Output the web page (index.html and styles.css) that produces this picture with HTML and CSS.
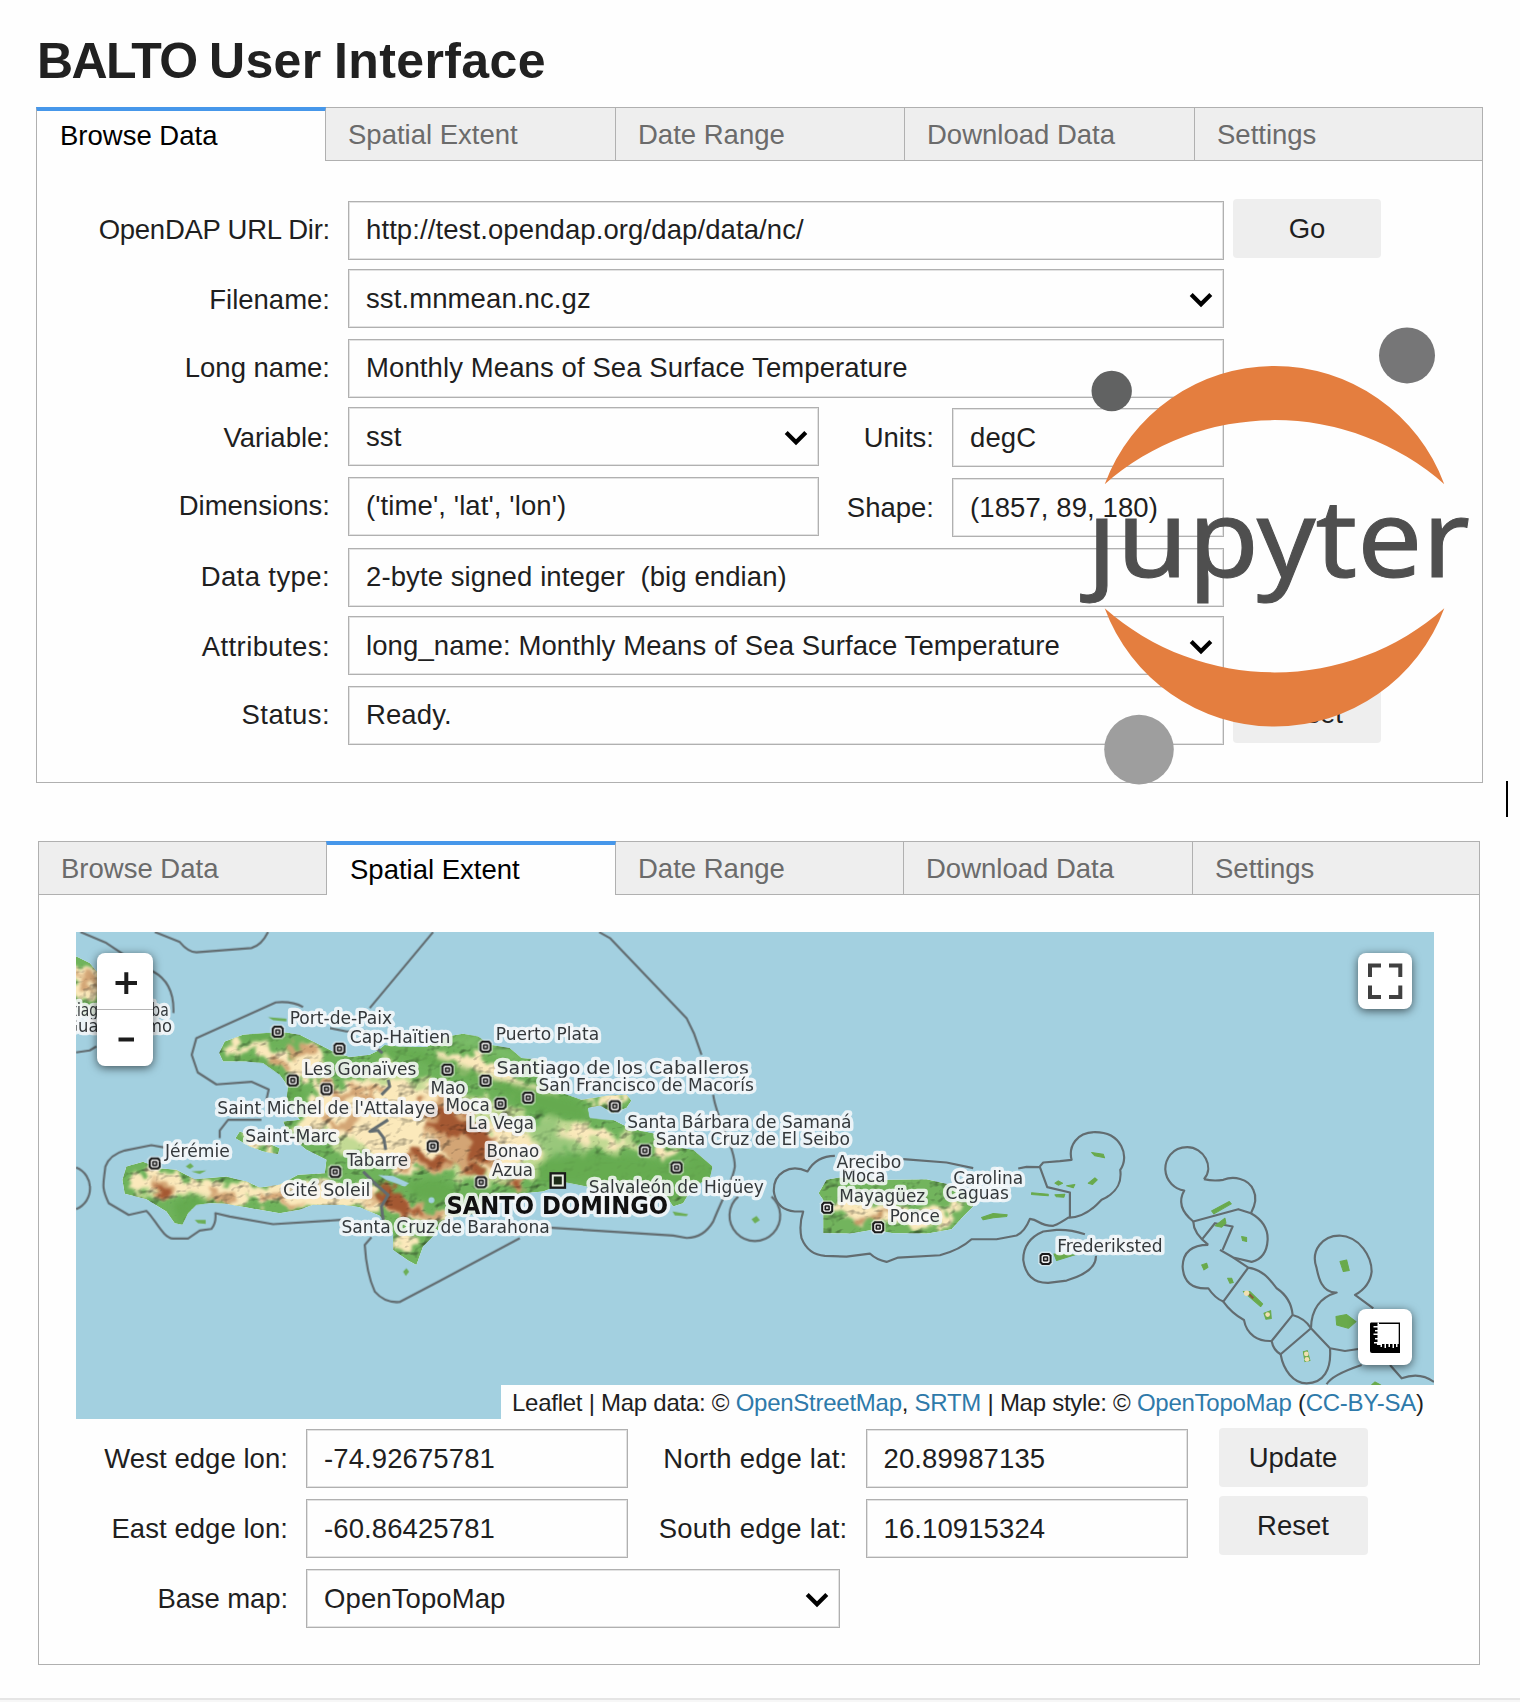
FILE: index.html
```html
<!DOCTYPE html>
<html lang="en">
<head>
<meta charset="utf-8">
<title>BALTO User Interface</title>
<link rel="stylesheet" href="styles.css">
</head>
<body>
<svg class="defs" width="0" height="0" aria-hidden="true">
  <symbol id="chevron" viewBox="0 0 24 16"><path d="M2.2 2.4 12 12.2 21.8 2.4" fill="none" stroke="#000" stroke-width="4.2"/></symbol>
</svg>
<main class="page">
  <h1 class="title"><span class="tight">BALTO</span> User Interface</h1>

  <section class="widget widget-browse">
    <nav class="tabs">
      <div class="tab active">Browse Data</div>
      <div class="tab">Spatial Extent</div>
      <div class="tab">Date Range</div>
      <div class="tab">Download Data</div>
      <div class="tab">Settings</div>
    </nav>
    <div class="body form-browse">
      <div class="row"><label class="label narrow">OpenDAP URL Dir:</label><div class="field wide">http://test.opendap.org/dap/data/nc/</div><div class="button">Go</div></div>
      <div class="row"><label class="label low">Filename:</label><div class="field wide select">sst.mnmean.nc.gz<svg class="chev"><use href="#chevron"/></svg></div></div>
      <div class="row"><label class="label">Long name:</label><div class="field wide">Monthly Means of Sea Surface Temperature</div></div>
      <div class="row"><label class="label low">Variable:</label><div class="field half select">sst<svg class="chev"><use href="#chevron"/></svg></div><label class="label second">Units:</label><div class="field small">degC</div></div>
      <div class="row"><label class="label">Dimensions:</label><div class="field half">('time', 'lat', 'lon')</div><label class="label second">Shape:</label><div class="field small">(1857, 89, 180)</div></div>
      <div class="row"><label class="label loose">Data type:</label><div class="field wide">2-byte signed integer&nbsp; (big endian)</div></div>
      <div class="row"><label class="label low loose">Attributes:</label><div class="field wide select">long_name: Monthly Means of Sea Surface Temperature<svg class="chev"><use href="#chevron"/></svg></div></div>
      <div class="row"><label class="label loose">Status:</label><div class="field wide">Ready.</div><div class="button">Reset</div></div>
    </div>
    <svg class="logo" viewBox="1070 320 410 470">
      <g fill="#e47e3f">
        <path d="M1104.7 484.2A181 181 0 0 1 1444.3 484.2A257 257 0 0 0 1104.7 484.2Z"/>
        <path d="M1104.7 608.3A181 181 0 0 0 1444.3 608.3A257 257 0 0 1 1104.7 608.3Z"/>
      </g>
      <circle cx="1111.7" cy="391" r="20.2" fill="#616262"/>
      <circle cx="1407" cy="355.4" r="28" fill="#767677"/>
      <circle cx="1139" cy="749.6" r="34.8" fill="#9e9e9e"/>
      <text class="logo-text" x="1087" y="576.5" textLength="383" lengthAdjust="spacingAndGlyphs">ȷupyter</text>
    </svg>
    <span class="caret"></span>
  </section>

  <section class="widget widget-spatial">
    <nav class="tabs">
      <div class="tab">Browse Data</div>
      <div class="tab active">Spatial Extent</div>
      <div class="tab">Date Range</div>
      <div class="tab">Download Data</div>
      <div class="tab">Settings</div>
    </nav>
    <div class="body form-spatial">
      <div class="map">
        <svg class="map-art" viewBox="49 37 4073 1460" preserveAspectRatio="none">
          <defs>
            <filter id="rough" x="-20%" y="-20%" width="140%" height="140%">
              <feTurbulence type="fractalNoise" baseFrequency="0.022" numOctaves="4" seed="7" result="n"/>
              <feDisplacementMap in="SourceGraphic" in2="n" scale="85" xChannelSelector="R" yChannelSelector="G"/>
              <feGaussianBlur stdDeviation="5"/>
            </filter>
            <filter id="soft" x="-10%" y="-10%" width="120%" height="120%"><feGaussianBlur stdDeviation="9"/></filter>
            <filter id="relief" x="0" y="0" width="100%" height="100%" color-interpolation-filters="sRGB">
              <feTurbulence type="fractalNoise" baseFrequency="0.018 0.024" numOctaves="3" seed="12" result="n"/>
              <feColorMatrix in="n" type="matrix" values="0 0 0 0 0  0 0 0 0 0  0 0 0 0 0  1 0 0 0 0" result="h"/>
              <feDiffuseLighting in="h" surfaceScale="8" diffuseConstant="1.38" lighting-color="#fff" result="l"><feDistantLight azimuth="225" elevation="50"/></feDiffuseLighting>
              <feBlend in="SourceGraphic" in2="l" mode="multiply" result="b"/>
              <feComposite in="b" in2="SourceGraphic" operator="in"/>
            </filter>
            <clipPath id="land">
              <path d="M478 400L495 365 550 345 620 340 680 338 720 345 770 370 820 395 870 412 930 405 950 395 975 376 1020 380 1100 382 1160 350 1210 342 1255 350 1290 375 1350 385 1385 415 1460 420 1450 500 1565 540 1640 528 1700 525 1715 542 1700 565 1660 580 1620 558 1585 565 1590 592 1660 600 1710 625 1780 640 1840 680 1900 690 1958 740 1950 775 1900 800 1870 850 1840 860 1820 830 1720 830 1580 800 1520 788 1450 815 1290 830 1260 880 1160 895 1120 950 1090 980 1070 1035 1045 1022 1000 990 1000 940 960 888 900 862 850 855 760 855 720 870 660 880 600 870 500 852 450 850 410 855 385 880 368 915 345 910 320 875 260 838 195 822 188 780 200 740 250 726 300 745 350 750 405 778 500 770 560 785 600 803 660 795 715 765 795 760 800 720 740 690 690 650 670 605 720 600 690 560 680 540 685 500 660 465 610 430 560 425 490 425Z"/>
              <path d="M527 655L540 635 580 650 660 685 655 703 610 695 570 680Z"/>
              <path d="M49 110L90 130 115 160 115 290 49 290Z"/>
            </clipPath>
            <clipPath id="rico"><path d="M190 400L190 300 176 280 200 240 240 232 380 240 500 238 560 252 640 290 640 320 610 350 575 388 500 402 400 400 340 390 270 402Z"/></clipPath>
            <g id="town"><path d="M-14-22H14L22-14V14L14 22H-14L-22 14V-14Z" fill="#f5f5f5" opacity=".55"/><path d="M-11-18H11L18-11V11L11 18H-11L-18 11V-11Z" fill="#1a1a1a"/><path d="M-8-12H8L12-8V8L8 12H-8L-12 8V-8Z" fill="#f2f2f2"/><rect x="-8" y="-8" width="16" height="16" rx="4" fill="#1c1c1c"/><rect x="-3.500" y="-3.500" width="7" height="7" fill="#c5c5c5"/></g>
          </defs>
          <rect x="0" y="0" width="4200" height="1560" fill="#a3d0e0"/>

          <g filter="url(#relief)"><g clip-path="url(#land)">
            <rect x="40" y="90" width="1950" height="980" fill="#6fb35b"/>
            <g filter="url(#rough)" fill="#c3da94">
              <path d="M980 420L1120 480 1300 540 1380 600 1480 590 1700 640 1780 700 1500 700 1440 780 1300 800 1000 720 850 700 700 620Z"/>
              <path d="M220 750L420 790 700 800 880 800 900 850 500 840 240 830Z"/>
            </g>
            <g filter="url(#rough)" fill="#fbe9bb">
              <path d="M490 380L600 360 680 400 740 370 800 430 780 500 1000 470 1140 520 1220 600 1400 640 1440 700 1300 770 1200 700 1030 760 900 660 700 630 760 570 760 500 660 440 560 390 500 410Z"/>
              <path d="M210 750L300 760 420 785 560 800 700 790 900 800 1080 870 1200 880 1080 900 920 860 700 855 560 845 380 820 220 815Z"/>
              <path d="M1120 395L1200 400 1300 430 1400 490 1500 530 1470 550 1300 480 1130 420Z"/>
              <path d="M1500 625L1600 610 1680 650 1700 680 1600 670 1500 655Z"/>
              <path d="M1560 540L1650 530 1710 545 1650 555Z"/><path d="M1780 690L1870 690 1850 720 1790 720Z"/>
              <path d="M530 640L660 690 650 710 570 680Z"/><path d="M1010 940L1080 950 1060 1000 1010 980Z"/>
              <path d="M49 130L115 160 115 250 49 260Z"/>
            </g>
            <g filter="url(#rough)" fill="#d3a575">
              <path d="M700 370L770 390 760 420 690 390Z"/><path d="M640 400L700 440 680 460 630 430Z"/>
              <path d="M790 490L900 510 980 490 940 530 820 530Z"/><path d="M800 600L900 600 860 640 800 620Z"/>
              <path d="M280 780L350 800 330 840 280 825Z"/><path d="M430 820L520 815 500 850 440 840Z"/>
              <path d="M600 820L730 840 700 860 620 845Z"/><path d="M60 150L90 160 100 220 60 200Z"/>
              <path d="M1100 540L1160 530 1300 640 1310 730 1220 760 1140 690 1080 620Z"/>
              <path d="M1010 690L1180 720 1160 760 1020 740Z"/><path d="M900 820L1120 870 1150 890 1020 890Z"/>
              <path d="M1330 780L1410 790 1380 810 1320 810Z"/>
            </g>
            <g filter="url(#rough)" fill="#a45830">
              <path d="M1130 560L1180 580 1260 620 1320 640 1290 670 1270 740 1220 720 1230 660 1180 640 1090 630 1080 610 1150 600Z"/>
              <path d="M950 800L1010 820 1080 880 1020 885 960 850Z"/><path d="M1040 690L1120 700 1200 740 1120 735 1040 715Z"/>
              <path d="M1100 550L1130 545 1140 590 1110 595Z"/>
              <path d="M285 800L340 810 325 830 290 822Z"/><path d="M1220 730L1290 760 1250 790Z"/><path d="M1340 790L1390 800 1350 815Z"/>
            </g>
          </g></g>
          <g clip-path="url(#land)"><g filter="url(#soft)" fill="#65aa50">
            <path d="M340 850L400 825 450 840 380 890 360 925Z"/>
            <path d="M975 388L1080 395 1200 440 1300 480 1400 500 1560 540 1600 610 1480 590 1380 560 1300 500 1180 460 1080 420 980 405Z"/>
            <path d="M1040 790L1130 775 1190 800 1180 840 1120 850 1060 830Z"/>
            <path d="M680 490L720 505 735 535 690 540Z"/>
            <path d="M560 405L620 430 670 465 650 470 600 435 540 420Z"/>
            <path d="M550 340L660 335 680 355 580 360Z"/>
            <path d="M1480 700L1600 700 1750 710 1880 740 1900 690 1970 740 1950 800 1860 830 1700 820 1560 790 1430 790 1430 740Z" opacity=".85"/>
            <path d="M1400 600L1500 590 1490 640 1600 690 1480 720 1430 680Z" opacity=".6" fill="#7dbb69"/>
            <path d="M1130 365L1240 345 1310 380 1390 410 1360 425 1260 385Z" fill="#7cbd69"/>
          </g></g>
          <g fill="#a3d0e0"><path d="M955 765L1000 768 1048 790 1035 800 980 780Z"/><path d="M1585 568L1625 560 1650 580 1680 600 1640 600 1590 594Z"/><circle cx="1115" cy="841" r="9"/></g>
          <g fill="#6cae56"><path d="M625 292L680 297 680 305 640 301Z"/><path d="M378 740L392 730 402 740 390 747ZM395 755L440 752 420 762ZM405 900L438 900 438 912 415 910ZM1030 1055L1040 1045 1048 1055 1038 1068Z"/><path d="M1838 875L1885 883 1880 889 1845 887Z"/><path d="M2075 898L2090 888 2100 901 2085 911Z"/></g>

          <g transform="translate(2100 540)">
            <g filter="url(#relief)"><g clip-path="url(#rico)"><rect x="170" y="220" width="480" height="190" fill="#72b45d"/>
              <g filter="url(#rough)"><path d="M200 320L280 300 420 320 560 330 620 290 560 370 440 375 260 350Z" fill="#fbe9bb"/><path d="M270 340L380 335 370 355 280 355Z" fill="#c79a68"/></g></g></g>
            <g class="isle"><path d="M665 353L700 341 742 345 740 350 700 354 670 360Z"/><path d="M995 158L1030 163 1034 174 1005 168Z"/><path d="M985 250L1005 234 1012 240 998 254Z"/><path d="M815 279L865 283 865 288 815 284ZM885 250L895 243 908 250 895 256ZM885 285L915 283 912 292 890 291ZM920 258L945 254 940 264Z"/><path d="M882 462L945 465 890 482Z"/></g>
          </g>

          <g class="border">
            <path d="M62 37L140 70 200 110 280 155Q345 190 341 280M285 37L360 67Q385 97 410 98L575 85Q605 78 625 37M49 398L90 392 110 380M49 743C105 765 105 845 49 868"/>
            <path d="M730 262C700 245 670 246 648 248L410 355 396 405 414 458 470 494 575 486 627 509 620 540M605 600H505L480 632V655"/>
            <path d="M810 325L860 335 920 335M930 265L1120 37M1618 37L1650 55 1880 295 1902 340 1925 405M1960 525C1970 600 2025 680 2025 740 2020 780 1990 830 1960 905Q1930 955 1880 954L1840 947 1465 923"/>
            <path d="M315 683L275 676 195 692Q150 705 137 740C132 790 123 800 147 850L207 885 260 873C285 895 310 955 340 956H385L420 932 455 927Q470 910 467 880L510 890 640 913 845 900"/>
            <path d="M935 952L915 975Q920 1060 945 1115 975 1150 1020 1146L1140 1083 1380 955"/>
            <path d="M2035 830A76 76 0 1 0 2135 830"/>
            <path class="frontier" d="M950 385L968 400M985 480L990 500 965 525M985 600L930 635 955 632 972 655 978 690M910 755L950 795 985 825 965 860 970 900"/>
          </g>
          <g class="border" transform="translate(2100 540)">
            <path d="M225 168Q170 168 143 215C90 190 40 220 42 275Q50 330 105 335H130C118 370 122 400 125 415Q145 465 195 468L260 470 330 461Q350 480 380 486L415 473 540 466Q600 450 635 418H710L770 407Q795 395 810 357C840 360 835 378 880 378Q900 370 925 353 975 355 1025 300C1080 275 1085 240 1081 210C1110 170 1085 97 1005 97C950 97 925 140 935 180L900 184 850 188 838 202 800 201 775 206M430 178L560 188 640 205"/>
            <path d="M840 202L862 262 930 278 930 352"/>
            <path d="M975 403Q930 388 890 390L850 395Q790 420 790 480 800 550 865 549L920 542Q1010 515 1008 468"/>
          </g>
          <g transform="translate(3120 0)">
            <g class="border">
              <path d="M312 778C345 740 310 682 262 682 215 682 196 720 196 748 198 785 225 808 253 812Q225 860 280 905L415 868 453 880Q475 840 460 810C445 775 400 768 370 780Q340 785 312 778"/>
              <path d="M280 905Q280 940 325 975M453 880Q505 910 503 960 500 1015 455 1026L400 1013 360 990M305 960L345 910 398 920 368 990M325 975Q250 975 248 1040 252 1110 325 1105 345 1135 370 1145L445 1043"/>
              <path d="M400 1013L445 1043C490 1050 510 1080 530 1105 560 1125 575 1150 578 1185L515 1263C475 1265 440 1245 432 1200Q395 1180 370 1145M578 1185Q615 1195 633 1225L542 1303Q520 1290 515 1263"/>
              <path d="M542 1303C550 1350 580 1390 620 1390 670 1390 695 1350 690 1285L633 1225Q635 1140 710 1118C665 1120 655 1070 650 1045 630 990 670 947 718 947 780 950 815 1010 815 1055Q810 1100 765 1125L820 1165M690 1285L735 1293 775 1287"/>
              <path d="M680 1393Q695 1365 785 1335M870 1335L905 1375Q960 1355 1002 1386"/>
            </g>
            <g class="isle"><path d="M335 873L388 845 394 852 342 882ZM345 918L375 895 378 910 365 922ZM425 950L440 953 440 965 428 962ZM305 1035L320 1030 324 1042 312 1050ZM383 1075L395 1075 400 1088 390 1090ZM720 1025L740 1020 748 1052 730 1055ZM708 1190L740 1184 768 1205 745 1225 710 1215ZM430 1115L450 1115 488 1152 482 1160ZM492 1180L512 1172 514 1196 498 1198ZM610 1295L622 1292 630 1322 615 1325ZM815 1395L825 1386 842 1395Z"/></g>
            <g fill="#f1dfb0"><circle cx="440" cy="1120" r="8"/><circle cx="503" cy="1184" r="7"/><circle cx="619" cy="1302" r="7"/><circle cx="621" cy="1318" r="7"/></g>
            <path d="M448 1123L460 1135" stroke="#8a5b38" stroke-width="6"/>
          </g>

          <g>
            <use href="#town" x="654" y="336"/><use href="#town" x="839" y="387"/><use href="#town" x="699" y="482"/><use href="#town" x="800" y="508"/><use href="#town" x="285" y="731"/><use href="#town" x="826" y="756"/>
            <use href="#town" x="1277" y="381"/><use href="#town" x="1163" y="450"/><use href="#town" x="1277" y="483"/><use href="#town" x="1322" y="552"/><use href="#town" x="1405" y="534"/><use href="#town" x="1665" y="559"/><use href="#town" x="1119" y="679"/><use href="#town" x="1755" y="692"/><use href="#town" x="1850" y="743"/><use href="#town" x="1264" y="787"/>
            <use href="#town" x="2302" y="864"/><use href="#town" x="2455" y="922"/><use href="#town" x="2957" y="1017"/>
            <rect x="1469" y="757" width="50" height="50" fill="#1a1a1a"/><rect x="1476" y="764" width="36" height="36" fill="#e6ecdf"/><rect x="1482" y="770" width="24" height="24" fill="#1d2c18"/>
          </g>
          <g class="place">
            <text x="327" y="290" text-anchor="end" textLength="370" lengthAdjust="spacingAndGlyphs">Santiago de Cuba</text>
            <text x="337" y="337" text-anchor="end" textLength="320" lengthAdjust="spacingAndGlyphs">Guantánamo</text>
            <text x="690" y="313" textLength="307" lengthAdjust="spacingAndGlyphs">Port-de-Paix</text>
            <text x="870" y="370" textLength="302" lengthAdjust="spacingAndGlyphs">Cap-Haïtien</text>
            <text x="732" y="466" textLength="338" lengthAdjust="spacingAndGlyphs">Les Gonaïves</text>
            <text x="473" y="584" textLength="654" lengthAdjust="spacingAndGlyphs">Saint Michel de l'Attalaye</text>
            <text x="557" y="666" textLength="275" lengthAdjust="spacingAndGlyphs">Saint-Marc</text>
            <text x="316" y="711" textLength="194" lengthAdjust="spacingAndGlyphs">Jérémie</text>
            <text x="860" y="738" textLength="185" lengthAdjust="spacingAndGlyphs">Tabarre</text>
            <text x="670" y="829" textLength="262" lengthAdjust="spacingAndGlyphs">Cité Soleil</text>
            <text x="845" y="939" textLength="625" lengthAdjust="spacingAndGlyphs">Santa Cruz de Barahona</text>
            <text x="1308" y="361" textLength="310" lengthAdjust="spacingAndGlyphs">Puerto Plata</text>
            <text x="1310" y="463" textLength="757" lengthAdjust="spacingAndGlyphs">Santiago de los Caballeros</text>
            <text x="1436" y="513" textLength="646" lengthAdjust="spacingAndGlyphs">San Francisco de Macorís</text>
            <text x="1112" y="524" textLength="105" lengthAdjust="spacingAndGlyphs">Mao</text>
            <text x="1157" y="573" textLength="133" lengthAdjust="spacingAndGlyphs">Moca</text>
            <text x="1225" y="628" textLength="198" lengthAdjust="spacingAndGlyphs">La Vega</text>
            <text x="1280" y="713" textLength="158" lengthAdjust="spacingAndGlyphs">Bonao</text>
            <text x="1297" y="769" textLength="123" lengthAdjust="spacingAndGlyphs">Azua</text>
            <text x="1788" y="676" textLength="582" lengthAdjust="spacingAndGlyphs">Santa Cruz de El Seibo</text>
            <text x="1702" y="625" textLength="673" lengthAdjust="spacingAndGlyphs">Santa Bárbara de Samaná</text>
            <text x="1587" y="819" textLength="525" lengthAdjust="spacingAndGlyphs">Salvaleón de Higüey</text>
            <text x="1160" y="883" textLength="665" lengthAdjust="spacingAndGlyphs" class="capital">SANTO DOMINGO</text>
            <text x="2345" y="788" textLength="132" lengthAdjust="spacingAndGlyphs">Moca</text>
            <text x="2330" y="746" textLength="194" lengthAdjust="spacingAndGlyphs">Arecibo</text>
            <text x="2338" y="845" textLength="258" lengthAdjust="spacingAndGlyphs">Mayagüez</text>
            <text x="2657" y="838" textLength="190" lengthAdjust="spacingAndGlyphs">Caguas</text>
            <text x="2680" y="792" textLength="210" lengthAdjust="spacingAndGlyphs">Carolina</text>
            <text x="2490" y="905" textLength="150" lengthAdjust="spacingAndGlyphs">Ponce</text>
            <text x="2992" y="995" textLength="316" lengthAdjust="spacingAndGlyphs">Frederiksted</text>
          </g>
        </svg>
        <div class="control zoom">
          <svg viewBox="0 0 56 56"><path d="M18.5 30H40M29.3 19.3V41" stroke="#1c1c1c" stroke-width="4"/></svg>
          <svg viewBox="0 0 56 56"><path d="M21.5 29.5H37" stroke="#1c1c1c" stroke-width="4"/></svg>
        </div>
        <div class="control fullscreen">
          <svg viewBox="0 0 54 56"><path d="M12 24V12.5H23M31 12.5H42.3V24M42.3 32.5V44H31M23 44H12V32.5" fill="none" stroke="#404040" stroke-width="4"/></svg>
        </div>
        <div class="control measure">
          <svg viewBox="0 0 54 56"><path d="M13 13.5H42V44H14Q12 44 12 42V15Q12 13.5 13 13.5Z" fill="#000"/><path d="M21 15H40.700V35H39.500V38H38V35H36V39H34.500V35H32V38H30.500V35H28V39H26.500V35H24V38H22.500V36H19V34.500H16V33H19.500V30.500H17V29H19.500V26H15.500V24.500H19.500V22.500H17V21H19.500V18.500H15.500V17H19.500V13.500H21Z" fill="#fff"/></svg>
        </div>
        <div class="attribution">Leaflet | Map data: © <a>OpenStreetMap</a>, <a>SRTM</a> | Map style: © <a>OpenTopoMap</a> (<a>CC-BY-SA</a>)</div>
      </div>
      <div class="fields">
        <div class="row"><label class="label">West edge lon:</label><div class="field coord">-74.92675781</div><label class="label second">North edge lat:</label><div class="field coord">20.89987135</div><div class="button">Update</div></div>
        <div class="row"><label class="label">East edge lon:</label><div class="field coord">-60.86425781</div><label class="label second">South edge lat:</label><div class="field coord">16.10915324</div><div class="button up">Reset</div></div>
        <div class="row"><label class="label base-label">Base map:</label><div class="field base select">OpenTopoMap<svg class="chev"><use href="#chevron"/></svg></div></div>
      </div>
    </div>
  </section>
  <footer class="rule"></footer>
</main>
</body>
</html>
```
FILE: styles.css
```css
* { box-sizing: border-box; }
body { margin: 0; background: #fefefe; color: #1f1f1f; font: 27.5px/1 "Liberation Sans", Arial, sans-serif; }
.defs { position: absolute; }
.page { display: flex; flex-direction: column; width: 1520px; height: 1702px; overflow: hidden; }
.title { margin: 32px 0 0 37px; height: 75px; font-size: 50px; line-height: 58px; letter-spacing: 0.4px; word-spacing: -2px; font-weight: 700; color: #212121; white-space: nowrap; }
.tight { letter-spacing: -1.6px; }

.widget { position: relative; display: flex; flex-direction: column; flex: none; }
.widget-browse { width: 1447px; height: 676px; margin-left: 36px; }
.widget-spatial { width: 1442px; height: 824px; margin: 58px 0 0 38px; }
.tabs { display: grid; grid-template-columns: 289px 290px 289px 290px 1fr; height: 54px; border: 1px solid #b0b0b0; border-bottom: 0; flex: none; }
.widget-spatial .tabs { grid-template-columns: 288px 289px 288px 289px 1fr; }
.tab { padding-left: 22px; height: 53px; line-height: 53px; background: #eee; color: #6b6b6b; border-right: 1px solid #b0b0b0; border-bottom: 1px solid #b0b0b0; white-space: nowrap; }
.tab:last-child { border-right: 0; }
.tab.active { height: 54px; background: #fefefe; color: #000; margin: -1px 0 0 -1px; padding-left: 23px; border-top: 4px solid #4697ea; border-left: 1px solid #b0b0b0; border-bottom: 0; line-height: 50px; }
.body { flex: 1; border: 1px solid #b0b0b0; border-top: 0; }

.row { display: flex; align-items: flex-start; }
.label { flex: none; text-align: right; line-height: 58px; white-space: nowrap; }
.field { flex: none; height: 59px; padding-left: 17px; border: 1px solid #b0b0b0; box-shadow: inset 0 0 0 1px #e2e2e2; background: #fefefe; line-height: 56px; white-space: nowrap; letter-spacing: 0.1px; }
.select { display: flex; justify-content: space-between; align-items: center; line-height: 62px; padding-right: 10px; }
.low { line-height: 62px; }
.loose { letter-spacing: 0.4px; }
.narrow { letter-spacing: -0.25px; }
.chev { width: 24px; height: 16px; margin-top: 2px; }
.button { flex: none; width: 148px; height: 59px; border-radius: 4px; background: #eee; text-align: center; line-height: 59px; }

.form-browse { display: grid; grid-template-rows: 68px 70px 68px 70px 71px 68px 70px 59px; padding-top: 40px; }
.form-browse .label { width: 293px; }
.form-browse .label + .field { margin-left: 18px; }
.form-browse .wide { width: 876px; }
.form-browse .half { width: 471px; }
.form-browse .label.second { width: 115px; margin-top: 1px; line-height: 59px; }
.form-browse .small { width: 272px; margin-top: 1px; line-height: 58px; }
.form-browse .button { margin: -2px 0 0 9px; }

.logo { position: absolute; left: 1034px; top: 213px; width: 410px; height: 470px; }
.logo-text { font: 107px "Noto Sans", sans-serif; fill: #4f4f4f; stroke: #4f4f4f; stroke-width: 1px; }
.caret { position: absolute; left: 1470px; top: 674px; width: 2px; height: 36px; background: #000; }

.form-spatial { padding: 37px 0 0 37px; }
.map { position: relative; width: 1358px; height: 487px; overflow: hidden; }
.map-art { display: block; width: 1358px; height: 487px; }
.border path { fill: none; stroke: #626c70; stroke-width: 6.500; stroke-linejoin: round; }
.border .frontier { stroke-width: 9; }
.isle { fill: #69aa4c; stroke: #69aa4c; stroke-width: 3; stroke-linejoin: round; }
.place { font: 54px "DejaVu Sans Condensed", "DejaVu Sans", sans-serif; fill: #34383b; stroke: rgba(248, 249, 250, .85); stroke-width: 20; stroke-linejoin: round; paint-order: stroke; }
.capital { font-size: 74px; font-weight: 700; fill: #111; }
.control { position: absolute; border-radius: 8px; background: #fff; box-shadow: 0 2px 10px rgba(0, 0, 0, .6); }
.control svg { display: block; width: 100%; height: 56px; }
.zoom { left: 21px; top: 21px; width: 56px; height: 113px; }
.zoom svg + svg { border-top: 1px solid #b5b5b5; height: 57px; }
.fullscreen { right: 22px; top: 21px; width: 54px; height: 56px; }
.measure { right: 22px; top: 377px; width: 54px; height: 56px; }
.attribution { position: absolute; right: 0; bottom: 0; width: 933px; height: 34px; padding-left: 11px; background: #fefefe; font-size: 24px; line-height: 35px; letter-spacing: -0.26px; white-space: nowrap; }
.attribution a { color: #2e7aaa; }

.fields { display: grid; grid-template-rows: 70px 70px 59px; padding-top: 10px; }
.fields .label { width: 212px; margin-right: 18px; line-height: 59px; letter-spacing: 0.05px; }
.fields .label.second { width: 219.500px; letter-spacing: 0.25px; }
.fields .base-label { letter-spacing: -0.1px; }
.fields .coord { width: 322px; line-height: 57px; }
.fields .base { width: 534px; line-height: 59px; }
.fields .button { width: 149px; margin: -1px 0 0 31px; }
.fields .button.up { margin-top: -3px; }
.rule { margin-top: auto; height: 4px; border-top: 2px solid #e5e5e5; background: #f7f7f7; }
```
